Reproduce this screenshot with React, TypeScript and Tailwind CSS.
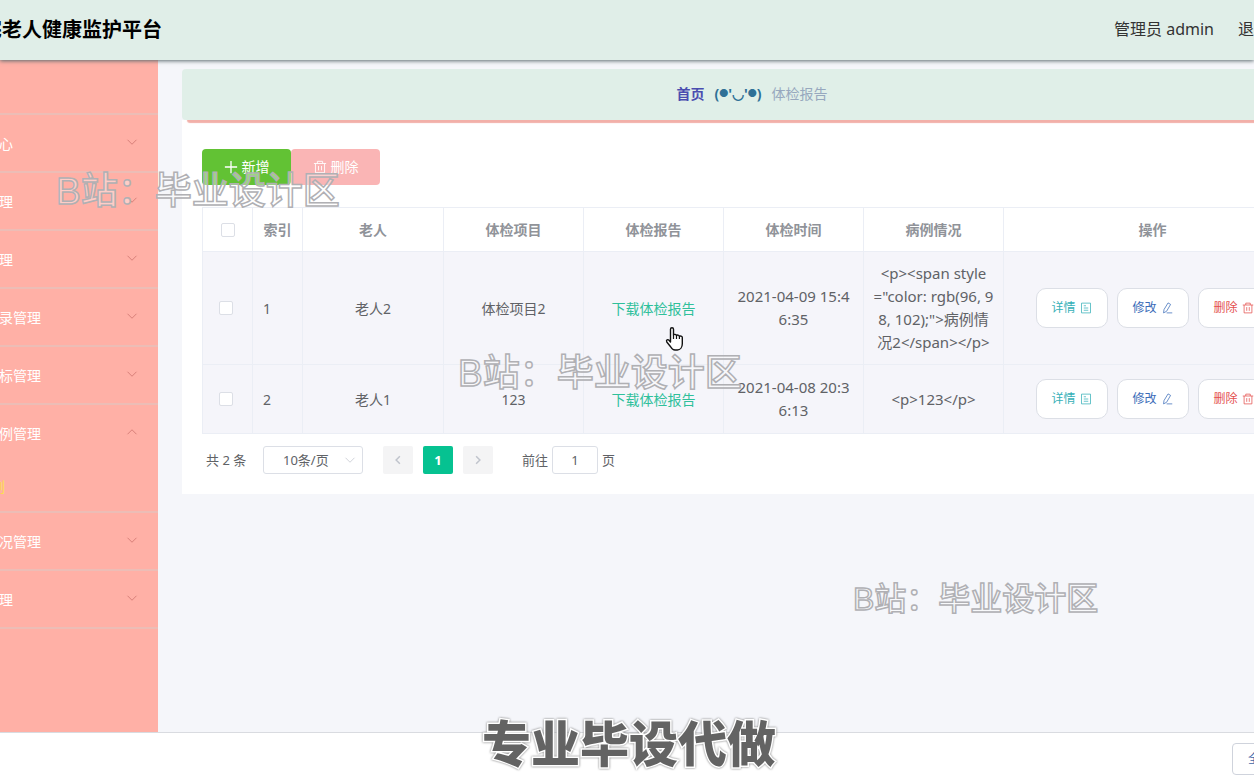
import { ReactNode } from "react"

type MenuItem = { label: string; open?: boolean; child?: string }

type ReportRow = {
    index: number
    elder: string
    item: string
    time: string[]
    detail: string[]
}

const menu: MenuItem[] = [
    { label: "心" },
    { label: "理" },
    { label: "理" },
    { label: "录管理" },
    { label: "标管理" },
    { label: "例管理", open: true, child: "例" },
    { label: "况管理" },
    { label: "理" },
]

const rows: ReportRow[] = [
    {
        index: 1,
        elder: "老人2",
        item: "体检项目2",
        time: ["2021-04-09 15:4", "6:35"],
        detail: ["<p><span style", "=\"color: rgb(96, 9", "8, 102);\">病例情", "况2</span></p>"],
    },
    { index: 2, elder: "老人1", item: "123", time: ["2021-04-08 20:3", "6:13"], detail: ["<p>123</p>"] },
]

const headers = ["老人", "体检项目", "体检报告", "体检时间", "病例情况", "操作"]

function Icon({ className, children }: { className: string; children: ReactNode }) {
    return (
        <svg className={className} viewBox="0 0 16 16" fill="none" stroke="currentColor" aria-hidden="true">
            {children}
        </svg>
    )
}

function TrashIcon({ className }: { className: string }) {
    return (
        <Icon className={className}>
            <path d="M1 4h14M5 4V1.5h6V4M2.8 4v10.5h10.4V4M6.3 6.8v5M9.7 6.8v5" />
        </Icon>
    )
}

function DocumentIcon({ className }: { className: string }) {
    return (
        <Icon className={className}>
            <path d="M2 1.5h12v13H2zM5 5h3M5 8h6M5 11h6" />
        </Icon>
    )
}

function EditIcon({ className }: { className: string }) {
    return (
        <Icon className={className}>
            <path d="M9.400 1.200l3.400 2-5.400 9.200-4 2.100.6-4.400zM7.500 14.500H15" />
        </Icon>
    )
}

function Chevron({ className, up }: { className: string; up?: boolean }) {
    return (
        <Icon className={className}>
            <path d={up ? "M2 11l6-6 6 6" : "M2 5l6 6 6-6"} />
        </Icon>
    )
}

function CheckBox({ label }: { label: string }) {
    return (
        <input type="checkbox" aria-label={label} className="block size-[14px] appearance-none rounded-xs border border-[#dcdfe6] bg-white" />
    )
}

function Watermark({ className }: { className: string }) {
    return (
        <span className={"pointer-events-none absolute whitespace-nowrap font-medium leading-none text-white/40 [-webkit-text-stroke:1.5px_#b0b0b4] " + className}>
            B站：毕业设计区
        </span>
    )
}

function SideMenu() {
    return (
        <nav className="w-[158px] shrink-0 overflow-hidden bg-[#ffb0a6] pt-[53px]">
            <ul className="border-t-2 border-[#ecbdb6]">
                {menu.map((item, index) => {
                    return (
                        <li key={index} className="border-b-2 border-[#ecbdb6]">
                            <button className="flex h-14 w-full items-center justify-between pr-5 pt-0.5 text-sm text-white" aria-expanded={!!item.open}>
                                <span className="-ml-px">{item.label}</span>
                                <Chevron className="mb-1 size-3 text-[#c96f6a]" up={item.open} />
                            </button>
                            {item.child && (
                                <a href="#report" className="-ml-[9px] flex h-[50px] items-center pt-0.5 text-sm text-[#fbe04a]">{item.child}</a>
                            )}
                        </li>
                    )
                })}
            </ul>
        </nav>
    )
}

function RowActions() {
    const style = "flex h-10 w-[72px] items-center justify-center gap-1 rounded-[10px] border border-[#dcdfe6] bg-white text-xs "
    return (
        <div className="flex justify-center gap-[9px]">
            <button className={style + "text-[#35b0b8]"}>详情<DocumentIcon className="size-3" /></button>
            <button className={style + "text-[#3b6cb8]"}>修改<EditIcon className="size-3" /></button>
            <button className={style + "text-[#e4504e]"}>删除<TrashIcon className="size-3" /></button>
        </div>
    )
}

function ReportTable() {
    const cell = "border border-[#ebeef5] px-2 py-[10px]"
    return (
        <table className="w-full table-fixed border-collapse text-center text-sm leading-[23px] text-[#606266]">
            <colgroup>
                <col className="w-[50px]" />
                <col className="w-[50px]" />
                <col className="w-[141px]" />
                <col className="w-[140px]" />
                <col className="w-[140px]" />
                <col className="w-[140px]" />
                <col className="w-[140px]" />
                <col />
            </colgroup>
            <thead className="text-[#909399]">
                <tr>
                    <th className={cell}><div className="flex justify-center"><CheckBox label="全选" /></div></th>
                    <th className={cell}>索引</th>
                    {headers.map((header) => <th key={header} className={cell}>{header}</th>)}
                </tr>
            </thead>
            <tbody className="bg-[#f5f5fa]">
                {rows.map((row) => {
                    return (
                        <tr key={row.index} className="h-[69px]">
                            <td className={cell}><div className="pl-2"><CheckBox label={"选择" + row.index} /></div></td>
                            <td className={cell + " text-left"}><span className="pl-0.5">{row.index}</span></td>
                            <td className={cell}>{row.elder}</td>
                            <td className={cell}>{row.item}</td>
                            <td className={cell}><a href="#download" className="text-[#2fc09a]">下载体检报告</a></td>
                            <td className={cell + " text-[15px]"}>{row.time.map((line) => <div key={line}>{line}</div>)}</td>
                            <td className={cell + " whitespace-nowrap text-[15px]"}>{row.detail.map((line) => <div key={line}>{line}</div>)}</td>
                            <td className={cell}><RowActions /></td>
                        </tr>
                    )
                })}
            </tbody>
        </table>
    )
}

function Pagination() {
    return (
        <div className="flex items-center pl-1 pt-3 text-[13px] leading-7 text-[#606266]">
            <span className="w-[57px]">共 2 条</span>
            <div className="relative">
                <select aria-label="每页条数" className="block h-7 w-[100px] appearance-none rounded-[3px] border border-[#dcdfe6] bg-white pl-[19px] text-[13px] leading-6">
                    <option>10条/页</option>
                </select>
                <Chevron className="pointer-events-none absolute right-[7px] top-2 size-3 text-[#c0c4cc]" />
            </div>
            <div className="ml-5 flex gap-[10px]">
                <button aria-label="上一页" className="flex h-7 w-[30px] items-center justify-center rounded-xs bg-[#f4f4f5] text-[#c0c4cc]">
                    <Icon className="size-3"><path strokeWidth="2" d="M10.5 3l-5 5 5 5" /></Icon>
                </button>
                <button className="h-7 w-[30px] rounded-xs bg-[#06c291] font-bold text-white">1</button>
                <button aria-label="下一页" className="flex h-7 w-[30px] items-center justify-center rounded-xs bg-[#f4f4f5] text-[#c0c4cc]">
                    <Icon className="size-3"><path strokeWidth="2" d="M5.5 3l5 5-5 5" /></Icon>
                </button>
            </div>
            <label className="ml-[29px] flex items-center gap-1">
                前往
                <input type="text" defaultValue="1" className="h-7 w-[46px] rounded-[3px] border border-[#dcdfe6] bg-white text-center" />
                页
            </label>
        </div>
    )
}

function App() {
    return (
        <div className="relative flex min-h-screen flex-col overflow-hidden bg-white font-['Noto_Sans','Noto_Sans_CJK_SC',sans-serif]">
            <header className="relative z-10 flex h-[60px] shrink-0 items-center justify-between whitespace-nowrap bg-[#e0eee8] shadow-[0_1px_4px_#5c6b6e]">
                <h1 className="-ml-[18px] text-xl font-bold text-black">宅老人健康监护平台</h1>
                <div className="-mr-4 flex gap-6 pb-0.5 text-base text-[#333]">
                    <span>管理员 admin</span>
                    <button>退出</button>
                </div>
            </header>

            <div className="flex flex-1">
                <SideMenu />
                <main className="min-w-0 flex-1 overflow-hidden bg-[#f5f6fa] pl-6 pt-[9px]">
                    {/* the panel runs on past the right edge of the window */}
                    <div className="-mr-[68px]">
                        <div className="relative flex h-[51px] items-center justify-center gap-[10px] rounded-sm bg-[#e0efe8] pb-0.5 text-sm shadow-[4px_4px_1px_-1px_#f2b0a9]">
                            <a href="#home" className="font-bold text-[#4a4db0]">首页</a>
                            <span className="flex items-center font-bold text-[#2f7096]">
                                (<span className="text-[9px]">●</span>'◡'<span className="text-[9px]">●</span>)
                            </span>
                            <span className="text-[#97a8be]">体检报告</span>
                        </div>
                        <section className="bg-white px-5 pb-5 pt-[29px]">
                            <div className="mb-[22px] flex">
                                <button className="flex h-9 w-[89px] items-center justify-center gap-1 rounded bg-[#62c234] text-sm text-white">
                                    <Icon className="size-[14px]"><path strokeWidth="1.5" d="M8 1v14M1 8h14" /></Icon>新增
                                </button>
                                <button className="flex h-9 w-[89px] items-center justify-center gap-1 rounded bg-[#fab5b5] text-sm text-white">
                                    <TrashIcon className="size-[14px]" />删除
                                </button>
                            </div>
                            <ReportTable />
                            <Pagination />
                        </section>
                    </div>
                </main>
            </div>

            <footer className="flex h-[52px] shrink-0 items-center justify-end border-t border-[#d9dbe0]">
                <button className="-mr-5 h-8 w-[42px] whitespace-nowrap rounded border border-[#cfd3dc] px-[15px] text-xs text-[#3f66a8]">全屏</button>
            </footer>

            <Watermark className="left-[56px] top-[173px] font-['Liberation_Sans','Noto_Sans_CJK_SC',sans-serif] text-[37px]" />
            <Watermark className="left-[458px] top-[355px] font-['Liberation_Sans','Noto_Sans_CJK_SC',sans-serif] text-[37px]" />
            <Watermark className="left-[853px] top-[583px] font-['Liberation_Sans','Noto_Sans_CJK_SC',sans-serif] text-[32px]" />
            <p className="pointer-events-none absolute bottom-4 left-[482px] whitespace-nowrap text-[49px] font-black leading-none text-[#636363] [paint-order:stroke] [-webkit-text-stroke:3px_#fff] drop-shadow-[0_0_1px_#777]">
                专业毕设代做
            </p>

            <svg className="pointer-events-none absolute left-[664px] top-[326px] h-[26px] w-5" viewBox="0 0 20 26" aria-hidden="true">
                <path
                    d="M6.5 16V3.2c0-2 3-2 3 0V9c.4-1 2.8-.9 3 .6.6-1 2.8-.7 2.9.8.8-.8 2.9-.5 2.9 1.2v6.2c0 3.4-2 6.2-5 6.2H11c-2.200 0-3.200-1.200-4.200-3L2.800 16c-1-2 1-3 2.200-1.800z"
                    fill="#fff" stroke="#111" strokeWidth="1.400" strokeLinejoin="round"
                />
                <path d="M9.500 9v4M12.500 9.600V13M15.400 10.400V13" stroke="#111" strokeWidth="1.200" />
            </svg>
        </div>
    )
}

export default App
